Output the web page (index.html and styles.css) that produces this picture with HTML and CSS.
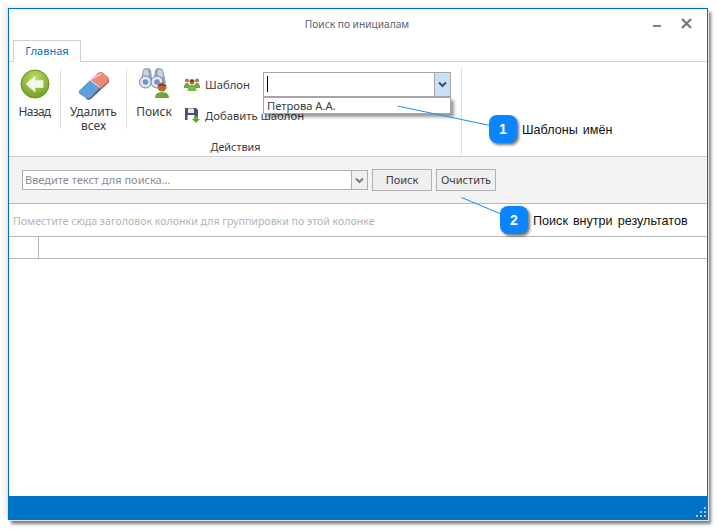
FILE: index.html
```html
<!DOCTYPE html>
<html lang="ru">
<head>
<meta charset="utf-8">
<title>Поиск по инициалам</title>
<link rel="stylesheet" href="styles.css">
</head>
<body>
<div class="window">
  <header class="titlebar">
    <div class="title">Поиск по инициалам</div>
    <svg class="win-min" width="12" height="12" viewBox="0 0 12 12"><rect x="1" y="7" width="8" height="2" fill="#7f7f7f"/></svg>
    <svg class="win-close" width="12" height="12" viewBox="0 0 12 12"><path d="M1 1l9 9M10 1l-9 9" stroke="#7a7a7a" stroke-width="2.400" fill="none"/></svg>
  </header>
  <div class="tabstrip"><div class="tab">Главная</div></div>
  <section class="ribbon">
    <div class="group">
      <div class="group-body">
        <button class="big big-back">
          <svg width="30" height="30" viewBox="0 0 30 30">
            <defs><radialGradient id="gb" cx="50%" cy="30%" r="75%"><stop offset="0" stop-color="#c0dc66"/><stop offset="1" stop-color="#6b9a1e"/></radialGradient></defs>
            <circle cx="15" cy="15" r="14" fill="url(#gb)" stroke="#6a9322"/>
            <path d="M6 15l9-8v4.500h8v7h-8v4.500z" fill="#f4f8e8" stroke="#e2ecc4"/>
          </svg>
          <span class="label-back">Назад</span>
        </button>
        <div class="vsep"></div>
        <button class="big big-del">
          <svg width="32" height="30" viewBox="0 0 32 30">
            <path d="M1 21L20 3q2-2 4-1l6 5q2 2 0 4L12 28q-2 1-4 0l-6-4q-2-1-1-3z" fill="#e98b7c"/>
            <path d="M1 21L12 10l9 7-9 11q-2 1-4 0l-6-4q-2-1-1-3z" fill="#5c9fdd"/>
            <path d="M12 10l9 7" stroke="#f4e6e2" stroke-width="1"/>
            <path d="M12 28l18-17q1-2 0-4l1 3q1 2-1 3L13 29q-2 1-4 0z" fill="#b8473c"/>
            <path d="M8 28q2 1 4 0l9-10 2 1-11 10q-2 1-4 0z" fill="#2f6fa8"/>
            <path d="M14 9L23 4" stroke="#f6c2b8" stroke-width="1.500"/>
          </svg>
          <span>Удалить<br>всех</span>
        </button>
        <div class="vsep"></div>
        <button class="big big-find">
          <svg width="32" height="32" viewBox="0 0 32 32">
            <path d="M2 16L5 3q1-2 4-2t4 2l1 8h2l1-8q1-2 4-2t4 2l3 13z" fill="#8fa3bd"/>
            <path d="M6 3q2-1 4 0l1 7H5zM20 3q2-1 4 0l1 7h-6z" fill="#c9d4e3"/>
            <circle cx="7.500" cy="15" r="6" fill="#dfe7f2" stroke="#6d84a6"/>
            <circle cx="7.500" cy="15" r="2.800" fill="#6f95cc"/>
            <circle cx="19" cy="15" r="6" fill="#dfe7f2" stroke="#6d84a6"/>
            <circle cx="19" cy="15" r="2.800" fill="#6f95cc"/>
            <circle cx="24" cy="20" r="4.500" fill="#b96a38"/>
            <path d="M20 18q4-3 8 0v1h-8z" fill="#7a4a22"/>
            <path d="M17 31q0-6 7-6t7 6z" fill="#6ca63a"/>
          </svg>
          <span>Поиск</span>
        </button>
        <div class="small-col">
          <button class="small">
            <svg width="16" height="16" viewBox="0 0 16 16">
              <circle cx="3" cy="4.500" r="2.100" fill="#b9794a"/><circle cx="13" cy="4.500" r="2.100" fill="#b9794a"/>
              <path d="M0 12q0-5 3-5t3 5z" fill="#6ca63a"/><path d="M10 12q0-5 3-5t3 5z" fill="#6ca63a"/>
              <circle cx="8" cy="6" r="2.400" fill="#a8622f"/><path d="M8 3.300a2.600 2.600 0 0 1 2.600 2.200H5.400A2.600 2.600 0 0 1 8 3.300z" fill="#6b3f1c"/>
              <path d="M3.500 15q0-6.500 4.500-6.500t4.500 6.500z" fill="#7fb648"/>
            </svg>
            <span>Шаблон</span>
          </button>
          <button class="small">
            <svg width="16" height="16" viewBox="0 0 16 16">
              <path d="M1 1h11l2 2v10H1z" fill="#44546e"/><rect x="4" y="1.500" width="6" height="4.500" fill="#e6ebf2"/><rect x="3.500" y="8" width="7" height="5" fill="#fff"/>
              <path d="M10 9h4v3h2l-4 4-4-4h2z" fill="#5fa82f"/>
            </svg>
            <span>Добавить шаблон</span>
          </button>
        </div>
        <div class="combo-wrap">
          <div class="combo">
            <div class="combo-input"><i class="caret"></i></div>
            <div class="combo-arrow"><svg width="9" height="7" viewBox="0 0 9 7"><path d="M1 1.500l3.500 3.500L8 1.500" stroke="#404a58" stroke-width="2" fill="none"/></svg></div>
          </div>
          <div class="popup">Петрова А.А.</div>
        </div>
      </div>
      <div class="group-label">Действия</div>
    </div>
  </section>
  <section class="searchbar">
    <div class="search-combo">
      <div class="search-input">Введите текст для поиска...</div>
      <div class="search-arrow"><svg width="9" height="7" viewBox="0 0 9 7"><path d="M1 1.500l3.500 3.500L8 1.500" stroke="#7d7d7d" stroke-width="2" fill="none"/></svg></div>
    </div>
    <button class="btn">Поиск</button>
    <button class="btn">Очистить</button>
  </section>
  <div class="groupby">Поместите сюда заголовок колонки для группировки по этой колонке</div>
  <div class="gridhead"><div class="indicator"></div></div>
  <div class="gridbody"></div>
  <footer class="statusbar">
    <svg class="grip" width="11" height="11" viewBox="0 0 11 11" fill="#b9c4cc"><rect x="8" y="0" width="2" height="2"/><rect x="4" y="4" width="2" height="2"/><rect x="8" y="4" width="2" height="2"/><rect x="0" y="8" width="2" height="2"/><rect x="4" y="8" width="2" height="2"/><rect x="8" y="8" width="2" height="2"/></svg>
  </footer>
</div>

<svg class="leaders" width="718" height="530" viewBox="0 0 718 530">
  <path d="M397.500 106L490 125.500M461.500 197.500L501 214" stroke="#1c8cf5" stroke-width="1" fill="none"/>
</svg>
<div class="callout callout-1"><b class="badge">1</b><span class="callout-text">Шаблоны имён</span></div>
<div class="callout callout-2"><b class="badge">2</b><span class="callout-text">Поиск внутри результатов</span></div>
</body>
</html>
```
FILE: styles.css
```css
* { box-sizing: border-box; }
html, body { margin: 0; height: 100%; }
body {
  width: 718px; height: 530px; overflow: hidden; background: #fff;
  font-family: "Noto Sans", "Open Sans", sans-serif; font-size: 12px; color: #3c3c3c;
  padding: 8px 0 0 8px;
  position: relative;
}
button { font: inherit; color: inherit; background: none; border: 0; padding: 0; margin: 0; }

.window {
  width: 700px; height: 512px;
  display: flex; flex-direction: column;
  background: #fff;
  border: 1px solid #0072c6;
  border-bottom: 0;
  box-shadow: -1px 0 0 #dfe3f3, 1px 1px 0 #dfe3f3, 3px 4px 3px rgba(0,0,0,.5), -4px -2px 5px rgba(0,0,0,.08);
}

.titlebar { height: 31px; flex: none; position: relative; }
.title { text-align: center; font-size: 10.200px; line-height: 30px; color: #5c6270; padding-right: 2px; }
.win-min { position: absolute; left: 643px; top: 9px; }
.win-close { position: absolute; left: 672px; top: 9px; }

.tabstrip { height: 22px; flex: none; border-bottom: 1px solid #d0d0d0; padding-left: 4px; }
.tab {
  width: 68px; height: 22px; border: 1px solid #d0d0d0; border-bottom: 0;
  background: #fff; color: #0072c6; text-align: center; line-height: 20px; font-size: 11px;
}

.ribbon { height: 95px; flex: none; border-bottom: 1px solid #d0d0d0; display: flex; }
.group { width: 453px; height: 88px; margin-top: 5px; border-right: 1px solid #e0e0e0; display: flex; flex-direction: column; }
.group-body { display: flex; height: 73px; flex: none; }
.group-label { text-align: center; font-size: 10.800px; line-height: 14px; height: 14px; padding-left: 1px; }

.big { display: flex; flex-direction: column; align-items: center; line-height: 14px; flex: none; height: 66px; }
.big span { display: block; }
.label-back { letter-spacing: -.7px; }
.big-back { width: 51px; padding-top: 2px; }
.big-back svg { margin-bottom: 6px; }
.big-del { width: 65px; padding-top: 3px; }
.big-del svg { margin-bottom: 5px; }
.big-find { width: 54px; padding-top: 0; }
.big-find svg { margin-bottom: 6px; }
.vsep { width: 1px; height: 60px; background: #e0e0e0; flex: none; margin-top: 2px; }

.small-col { width: 79px; flex: none; display: flex; flex-direction: column; gap: 15px; padding: 9px 0 0 3px; }
.small { display: flex; align-items: center; gap: 5px; height: 16px; white-space: nowrap; font-size: 11.300px; }
.small svg { flex: none; }

.combo-wrap { width: 188px; flex: none; position: relative; margin: 5px 0 0 3px; }
.combo { display: flex; width: 188px; height: 25px; border: 1px solid #a6a6a6; background: #fff; }
.combo-input { flex: 1; padding: 3px 3px; }
.caret { display: block; width: 1px; height: 16px; background: #000; }
.combo-arrow { width: 16px; border-left: 1px solid #a6a6a6; background: #c7e0f6; display: flex; align-items: center; justify-content: center; }
.popup {
  position: absolute; left: 0; top: 25px; width: 188px; height: 17px;
  background: #fff; border: 1px solid #a6a6a6; padding-left: 3px; line-height: 16px; font-size: 11.200px; color: #3c3c3c;
  box-shadow: 3px 3px 3px rgba(0,0,0,.4);
}

.searchbar {
  height: 47px; flex: none; background: #f3f3f3; border-bottom: 1px solid #b8b8b8;
  display: flex; gap: 4px; padding: 12px 0 0 13px; align-items: flex-start;
}
.search-combo { display: flex; width: 346px; height: 20px; border: 1px solid #b0b0b0; background: #fff; margin-top: 1px; }
.search-input { flex: 1; padding-left: 2px; line-height: 18px; font-size: 11px; color: #8a8a96; }
.search-arrow { width: 16px; border-left: 1px solid #b0b0b0; background: #f0f0f0; display: flex; align-items: center; justify-content: center; }
.btn { width: 60px; height: 22px; border: 1px solid #b0b0b0; background: #efefef; font-size: 11px; line-height: 20px; text-align: center; color: #3c3c3c; }

.groupby { height: 33px; flex: none; border-bottom: 1px solid #b8b8b8; color: #b4b4b4; font-size: 10.600px; line-height: 34px; padding-left: 4px; }
.gridhead { height: 22px; flex: none; border-bottom: 1px solid #b8b8b8; }
.indicator { width: 30px; height: 21px; border-right: 1px solid #b8b8b8; }
.gridbody { flex: 1; }

.statusbar { height: 24px; flex: none; background: #0072c6; position: relative; }
.grip { position: absolute; right: 0; bottom: 2px; }

.leaders { position: absolute; left: 0; top: 0; pointer-events: none; }
.callout { position: absolute; display: flex; align-items: center; gap: 5px; font-family: "Liberation Sans", Arial, sans-serif; font-size: 12.600px; word-spacing: 1.500px; color: #111; white-space: nowrap; }
.callout-text { padding-top: 2px; }
.callout-1 { left: 489px; top: 115px; }
.callout-2 { left: 500px; top: 206px; }
.badge {
  width: 28px; height: 28px; border-radius: 8px; background: #0a84ff; color: #fff;
  font-size: 14px; font-weight: bold; display: flex; align-items: center; justify-content: center;
  box-shadow: 2px 2px 3px rgba(0,0,0,.55);
}
```
